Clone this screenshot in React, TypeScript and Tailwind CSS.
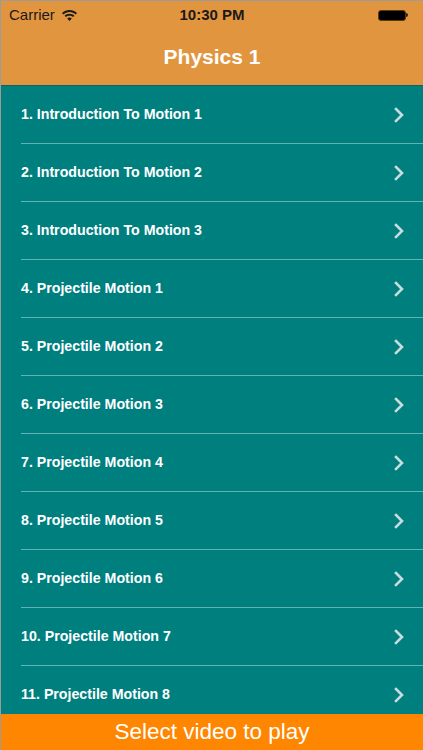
import React from 'react'

const lessons = [
  '1. Introduction To Motion 1',
  '2. Introduction To Motion 2',
  '3. Introduction To Motion 3',
  '4. Projectile Motion 1',
  '5. Projectile Motion 2',
  '6. Projectile Motion 3',
  '7. Projectile Motion 4',
  '8. Projectile Motion 5',
  '9. Projectile Motion 6',
  '10. Projectile Motion 7',
  '11. Projectile Motion 8',
]

const WifiIcon = () => (
  <svg width="15" height="11" viewBox="0 0 15 11" fill="#1a1a1a">
    <path d="M7.5 0C4.6 0 2 1.1 0 3l1.3 1.4C3 2.8 5.1 1.9 7.5 1.9s4.5.9 6.2 2.5L15 3C13 1.1 10.4 0 7.5 0z" />
    <path d="M7.5 3.8c-1.9 0-3.6.7-4.9 1.9l1.3 1.4c1-.9 2.2-1.4 3.6-1.4s2.6.5 3.6 1.4l1.3-1.4c-1.3-1.2-3-1.9-4.9-1.9z" />
    <path d="M7.5 7.5c-.9 0-1.7.3-2.3.9L7.5 11l2.3-2.6c-.6-.6-1.4-.9-2.3-.9z" />
  </svg>
)

const Chevron = () => (
  <svg width="10" height="16" viewBox="0 0 10 16" fill="none">
    <path d="M2 2l6 6-6 6" stroke="#c9dcdc" strokeWidth="2.6" strokeLinecap="square" />
  </svg>
)

export default function App() {
  return (
    <div
      className="w-[423px] h-[750px] flex flex-col overflow-hidden bg-[#007f7f] border-l border-t border-[#9c9c9c]"
      style={{ fontFamily: '"Liberation Sans", Arial, sans-serif' }}
    >
      <div className="shrink-0 bg-[#e2953f] border-b border-[#0c6464]">
        <div className="h-[28px] flex items-center px-2 relative">
          <div className="flex items-center gap-[7px] text-[15px] text-[#1a1a1a]">
            <span>Carrier</span>
            <WifiIcon />
          </div>
          <div className="absolute left-0 right-0 text-center text-[15px] font-bold text-[#1a1a1a] pointer-events-none">
            10:30 PM
          </div>
          <div className="ml-auto mr-[7px] flex items-center">
            <div className="w-[28px] h-[11px] rounded-[3px] bg-black border border-[#5a3a10]" />
            <div className="w-[2px] h-[4px] bg-[#222] rounded-r-sm" />
          </div>
        </div>
        <div className="h-[56px] flex items-center justify-center text-white text-[21px] font-bold">
          Physics 1
        </div>
      </div>
      <div className="flex-1 min-h-0 overflow-hidden flex flex-col">
        {lessons.map((l, i) => (
          <div key={l} className="shrink-0 flex flex-col">
            <div className="h-[57px] flex items-center pl-[20px] pr-[19px]">
              <span className="flex-1 text-white text-[14.2px] font-bold">{l}</span>
              <Chevron />
            </div>
            {i < lessons.length - 1 && <div className="h-px ml-[20px] bg-[#62b3b3]" />}
          </div>
        ))}
      </div>
      <div className="h-[36px] shrink-0 bg-[#ff8600] flex items-center justify-center text-white text-[22.5px]">
        Select video to play
      </div>
    </div>
  )
}
